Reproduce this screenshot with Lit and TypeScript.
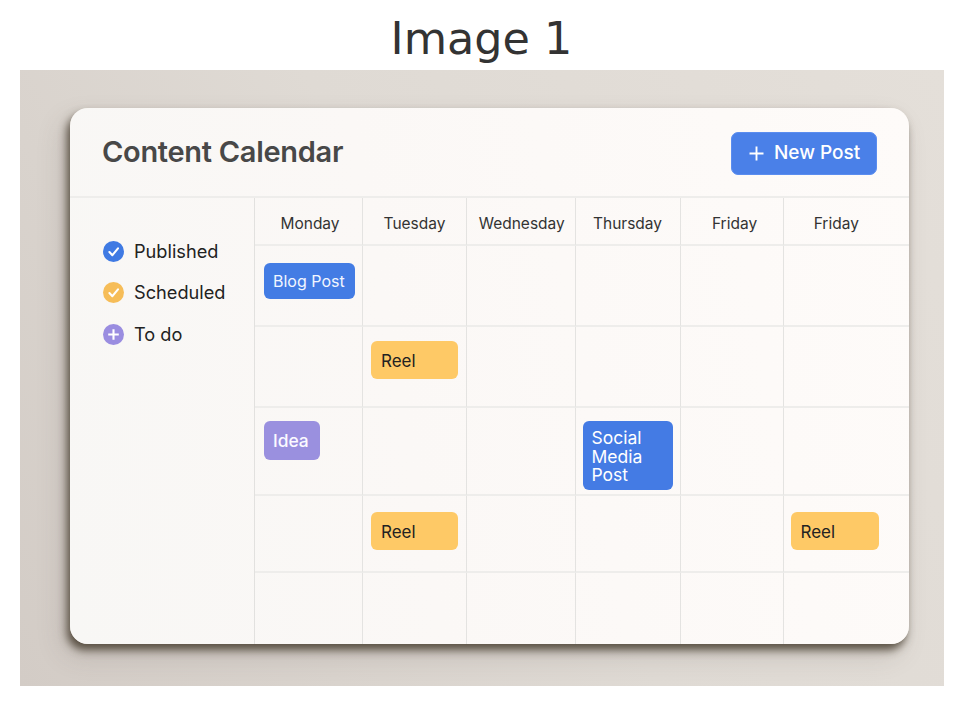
import { LitElement, html, css, svg } from "lit";
import { customElement } from "lit/decorators.js";

type Ev = { label: string; kind: string };
const days = ["Monday", "Tuesday", "Wednesday", "Thursday", "Friday", "Friday"];
const rows: (Ev | null)[][] = [
  [{ label: "Blog Post", kind: "blog" }, null, null, null, null, null],
  [null, { label: "Reel", kind: "reel" }, null, null, null, null],
  [{ label: "Idea", kind: "idea" }, null, null, { label: "Social Media Post", kind: "social" }, null, null],
  [null, { label: "Reel", kind: "reel" }, null, null, null, { label: "Reel", kind: "reel last" }],
  [null, null, null, null, null, null],
];

const check = svg`<path d="M6.4 11l3 3.2 5.6-6.8" fill="none" stroke="#fff" stroke-width="2.1" stroke-linecap="round" stroke-linejoin="round"/>`;
const plus = svg`<path d="M10.5 5.2v10.6M5.2 10.5h10.6" fill="none" stroke="#fff" stroke-width="2.1"/>`;

@customElement("app-root")
export class AppRoot extends LitElement {
  static styles = css`
    :host { display: block; width: 963px; height: 706px; background: #fff; font-family: Inter, "Noto Sans", sans-serif; overflow: hidden; }
    h1 { margin: 0; height: 70px; padding-top: 11px; box-sizing: border-box; text-align: center; font: 400 44.5px/56px "DejaVu Sans", sans-serif; color: #333; }
    .stage { margin: 0 19px 0 20px; height: 616px; box-sizing: border-box; padding: 38px 35px 42px 50px;
      background: linear-gradient(60deg, #d3ccc6 0%, #dfdad4 50%, #e4dfd9 100%); }
    .card { height: 536px; border-radius: 18px; overflow: hidden; display: flex; flex-direction: column;
      background: linear-gradient(80deg, #f8f7f5 0%, #fbf8f6 40%, #fefbf9 100%); }
    .shadow { border-radius: 18px; box-shadow: -3px 6px 8px rgba(66, 56, 42, .82), -8px 12px 26px rgba(90, 80, 70, .18); }
    header { height: 90px; flex: none; box-sizing: border-box; border-bottom: 2px solid #eeedeb; display: flex; align-items: center; justify-content: space-between; padding: 0 32px; }
    h2 { margin: 0; font-size: 29px; line-height: 36px; font-weight: 600; color: #484848; letter-spacing: -0.3px; }
    .new { width: 146px; height: 43px; margin-top: 2px; box-sizing: border-box; display: flex; align-items: center; gap: 10px; padding-left: 17px; border: 1px solid #5b8def; border-radius: 7px; background: #4a80e8; color: #fff; font: 500 19px/24px Inter, sans-serif; }
    .new svg { display: block; flex: none; }
    .body { flex: 1; display: flex; min-height: 0; }
    aside { width: 184px; flex: none; box-sizing: border-box; padding: 41px 0 0 33px; display: flex; flex-direction: column; gap: 15.5px; }
    .leg { display: flex; align-items: center; gap: 10px; height: 25.5px; font-size: 18.2px; line-height: 25px; color: #222; }
    .leg:last-child { margin-top: 0.6px; }
    .leg svg { display: block; flex: none; }
    .grid { flex: 1; display: grid; grid-template-columns: 108px 104px 108.5px 105px 103px 1fr; grid-template-rows: 48px 81px 81px 88px 77px 1fr; border-left: 1px solid #e2e1df; }
    .cell { box-sizing: border-box; border-right: 1px solid #e4e3e1; border-bottom: 2px solid #eeedeb; min-width: 0; }
    .cell.endc { border-right: 0; }
    .cell.endr { border-bottom: 0; }
    .hd { display: flex; align-items: center; justify-content: center; padding-top: 4px; font-size: 15.5px; color: #333; }
    .h0 { padding-left: 3px; }
    .h2 { padding-left: 2px; }
    .h4 { padding-left: 6px; }
    .h5 { padding-right: 20px; }
    .r0 { padding-top: 17px; } .r1 { padding-top: 14px; } .r2 { padding-top: 13px; } .r3 { padding-top: 16px; }
    .ev { box-sizing: border-box; display: flex; align-items: center; border-radius: 6px; margin-left: 8px; font-size: 17px; line-height: 18.5px; padding: 2px 0 0 10px; }
    .blog { width: 91px; height: 36px; margin-left: 9px; background: #437ce4; color: #f2f6ff; font-size: 16px; padding: 0 0 0 9px; }
    .reel { width: 87px; height: 38px; background: #fec966; color: #222; }
    .reel.last { width: 88px; margin-left: 7px; }
    .idea { width: 56px; height: 39px; margin-left: 9px; background: #9a90df; color: #fbfaff; font-weight: 500; padding-left: 9px; font-size: 17.4px; }
    .social { width: 90px; height: 69px; background: #447be4; color: #fff; margin-left: 7px; padding: 3px 0 0 9px; font-size: 17.5px; }
  `;

  render() {
    return html`
      <h1>Image 1</h1>
      <div class="stage">
        <div class="shadow">
          <div class="card">
            <header>
              <h2>Content Calendar</h2>
              <div class="new">
                <svg width="15" height="15" viewBox="0 0 15 15"><path d="M7.5 0.5v14M0.5 7.5h14" fill="none" stroke="#fff" stroke-width="1.9"/></svg>
                <span>New Post</span>
              </div>
            </header>
            <div class="body">
              <aside>
                <div class="leg"><svg width="21" height="21" viewBox="0 0 21 21"><circle cx="10.5" cy="10.5" r="10.5" fill="#3f7ae3"/>${check}</svg>Published</div>
                <div class="leg"><svg width="21" height="21" viewBox="0 0 21 21"><circle cx="10.5" cy="10.5" r="10.5" fill="#f6bd58"/>${check}</svg>Scheduled</div>
                <div class="leg"><svg width="21" height="21" viewBox="0 0 21 21"><circle cx="10.5" cy="10.5" r="10.5" fill="#9a8de0"/>${plus}</svg>To do</div>
              </aside>
              <div class="grid">
                ${days.map((d, i) => html`<div class="cell hd h${i} ${i === 5 ? "endc" : ""}">${d}</div>`)}
                ${rows.map((r, ri) => r.map((e, ci) => html`
                  <div class="cell r${ri} ${ci === 5 ? "endc" : ""} ${ri === 4 ? "endr" : ""}">
                    ${e ? html`<div class="ev ${e.kind}"><span>${e.label}</span></div>` : null}
                  </div>`))}
              </div>
            </div>
          </div>
        </div>
      </div>
    `;
  }
}
